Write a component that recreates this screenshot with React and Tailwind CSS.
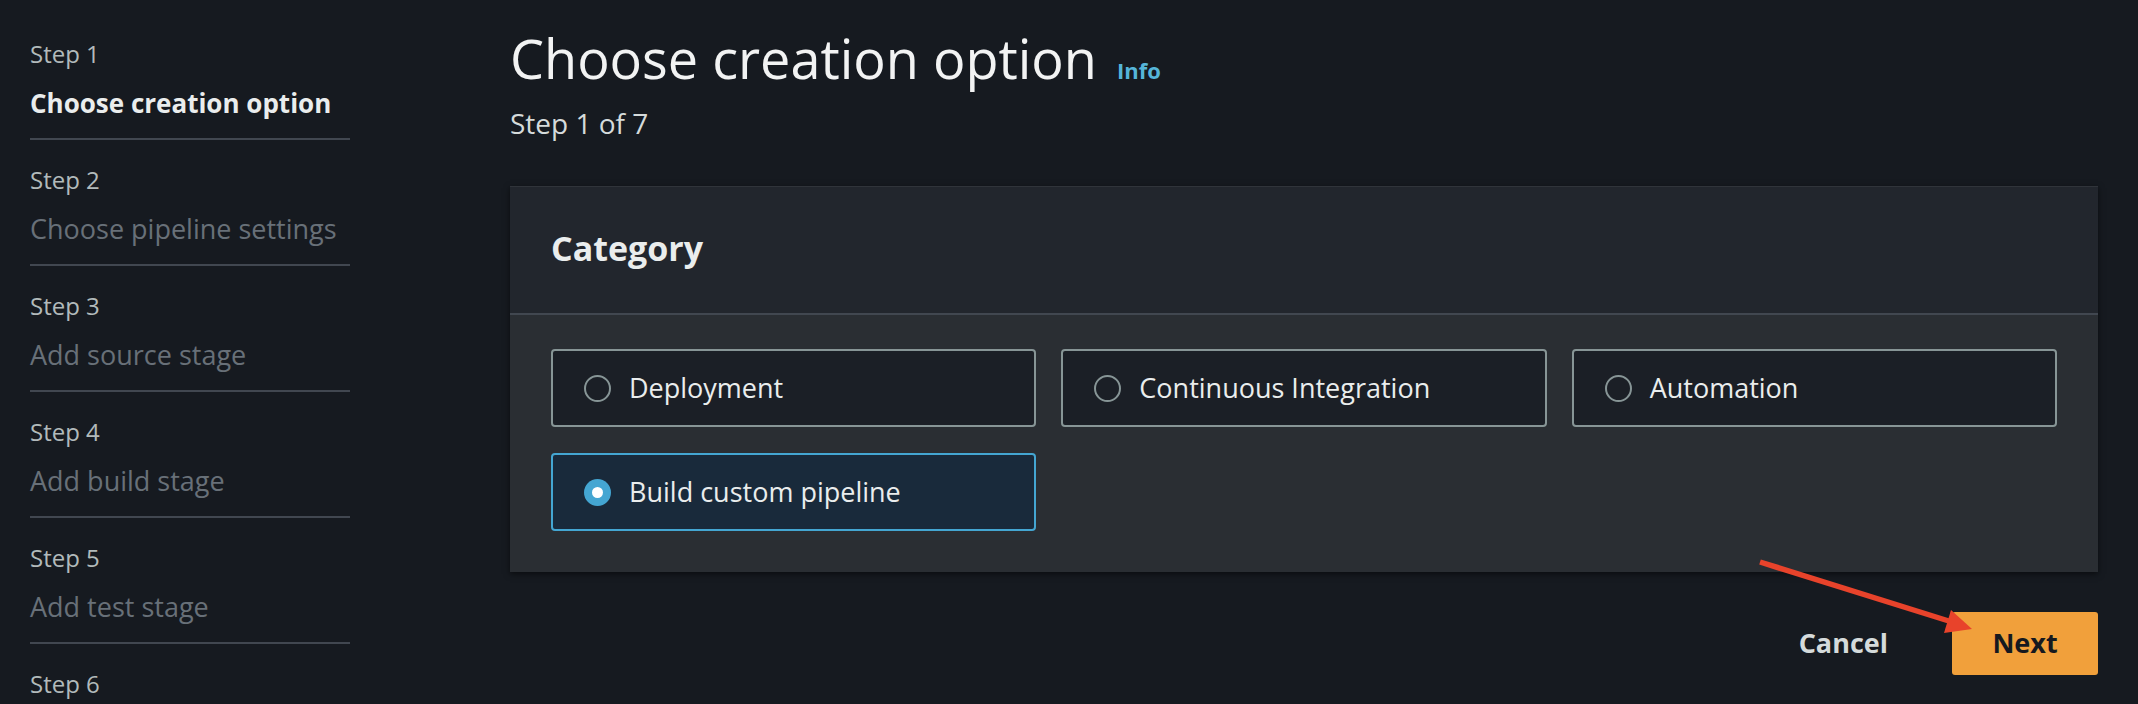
import React from "react";

const steps = [
  "Choose creation option",
  "Choose pipeline settings",
  "Add source stage",
  "Add build stage",
  "Add test stage",
];

const options = [
  { label: "Deployment", selected: false },
  { label: "Continuous Integration", selected: false },
  { label: "Automation", selected: false },
  { label: "Build custom pipeline", selected: true },
];

const RadioTile = ({ label, selected }) => (
  <div
    className={`h-[78px] rounded-[4px] border-2 flex items-center pl-[31px] gap-[18px] ${
      selected ? "bg-[#192a3b] border-[#44a6d2]" : "bg-[#1b1f26] border-[#879596]"
    }`}
  >
    {selected ? (
      <span className="w-[27px] h-[27px] rounded-full bg-[#44a6d2] flex items-center justify-center flex-shrink-0">
        <span className="w-[11px] h-[11px] rounded-full bg-white" />
      </span>
    ) : (
      <span className="w-[27px] h-[27px] rounded-full border-2 border-[#879596] flex-shrink-0" />
    )}
    <span className="text-[27px] leading-[40px] text-[#eaeded]">{label}</span>
  </div>
);

export default function App() {
  return (
    <div className="relative h-[704px] w-[2138px] overflow-hidden bg-[#161a20] font-['Open_Sans',sans-serif] flex">
      {/* Wizard steps */}
      <nav className="ml-[30px] w-[320px] pt-[14px] flex-shrink-0">
        {steps.map((title, i) => (
          <div key={title} className="pt-[22px] pb-[15px] border-b-2 border-[#414750]">
            <div className="text-[24px] leading-[36px] text-[#b2babb]">Step {i + 1}</div>
            <div
              className={`mt-[11px] leading-[40px] ${
                i === 0 ? "text-[26px] font-bold text-[#eaeded]" : "text-[27px] text-[#687078]"
              }`}
            >
              {title}
            </div>
          </div>
        ))}
        <div className="pt-[22px]">
          <div className="text-[24px] leading-[36px] text-[#b2babb]">Step 6</div>
        </div>
      </nav>

      {/* Main */}
      <main className="ml-[160px] mr-[40px] flex-1 pt-[26px]">
        <div className="flex items-baseline">
          <h1 className="text-[54px] leading-[65px] font-normal text-[#f2f3f3]">Choose creation option</h1>
          <span className="ml-[20px] text-[22px] font-bold text-[#55b5d9]">Info</span>
        </div>
        <p className="mt-[12px] text-[28px] leading-[40px] text-[#d5dbdb]">Step 1 of 7</p>

        <section className="mt-[43px] border-t border-[#30343a] shadow-[0_2px_6px_rgba(0,0,0,0.55)]">
          <div className="bg-[#22262d] px-[41px] pt-[37px] pb-[41px] border-b-2 border-[#414750]">
            <h2 className="text-[34px] leading-[48px] font-bold text-[#eaeded]">Category</h2>
          </div>
          <div className="bg-[#2a2e33] px-[41px] pt-[34px] pb-[41px] grid grid-cols-3 gap-x-[25px] gap-y-[26px]">
            {options.map((o) => (
              <RadioTile key={o.label} {...o} />
            ))}
          </div>
        </section>

        <div className="mt-[40px] flex justify-end items-center">
          <button className="px-[20px] mr-[44px] text-[27px] font-bold text-[#d5dbdb]">Cancel</button>
          <button className="w-[146px] h-[63px] rounded-[3px] bg-[#f1a03b] text-[27px] font-bold text-[#16191f]">
            Next
          </button>
        </div>
      </main>

      {/* Annotation arrow */}
      <svg className="absolute inset-0 pointer-events-none" width="2138" height="704">
        <line x1="1760" y1="562" x2="1952" y2="622" stroke="#e8432b" strokeWidth="5.5" />
        <polygon points="1972,629 1951,610 1944,633" fill="#e8432b" />
      </svg>
    </div>
  );
}
